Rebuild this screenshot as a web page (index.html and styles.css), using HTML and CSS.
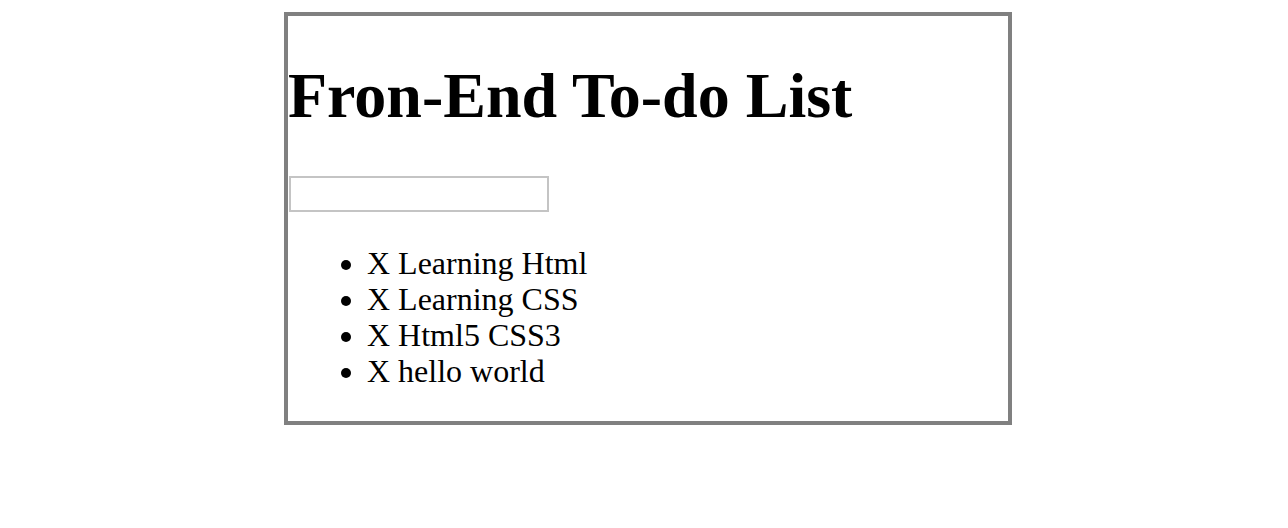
FILE: index.html
```html
<!DOCTYPE html>
<html>
<head>
<meta charset="utf-8">
<link rel="stylesheet" href="styles.css">
</head>
<body>
<div class="todo">
  <h1 class="title">Fron-End To-do List</h1>
  <input class="entry" type="text">
  <ul class="items">
    <li><span class="del">X</span> Learning Html</li>
    <li><span class="del">X</span> Learning CSS</li>
    <li><span class="del">X</span> Html5 CSS3</li>
    <li><span class="del">X</span> hello world</li>
  </ul>
</div>
</body>
</html>
```
FILE: styles.css
```css
html, body {
  margin: 0;
  padding: 0;
  background: #fff;
}
body {
  padding: 12px 0 0 284px;
  font-family: "Liberation Serif", "Times New Roman", serif;
  color: #000;
}
.todo {
  width: 720px;
  border: 4px solid #808080;
  font-size: 32px;
}
.title {
  font-size: 64px;
  font-weight: bold;
  margin: 43px 0;
  line-height: normal;
}
.entry {
  display: block;
  box-sizing: border-box;
  width: 260px;
  height: 36px;
  margin: 4px 0 0 1px;
  border: 2px solid #c4c4c4;
  padding: 0;
  background: #fff;
  outline: none;
}
.items {
  margin: 33px 0 32px;
  padding-left: 79px;
  list-style: disc;
}
.items li {
  line-height: 36px;
}
```
